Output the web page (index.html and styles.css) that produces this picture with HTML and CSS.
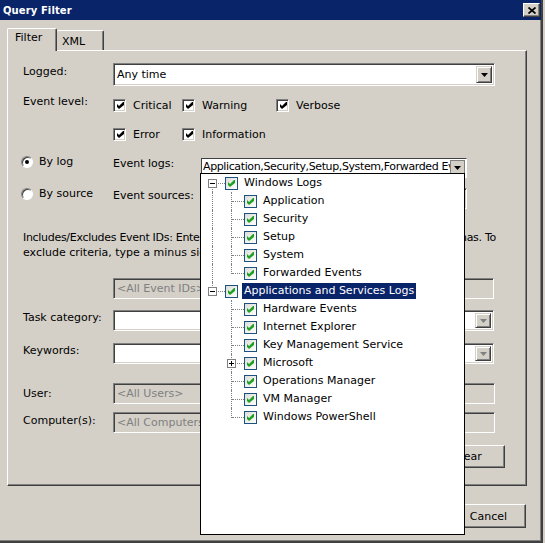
FILE: index.html
```html
<!DOCTYPE html>
<html>
<head>
<meta charset="utf-8">
<title>Query Filter</title>
<link rel="stylesheet" href="styles.css">
</head>
<body>
<div class="window">
  <div class="titlebar">
    <span class="title">Query Filter</span>
    <span class="close"><svg width="8" height="7" viewBox="0 0 8 7"><path d="M0.5 0.5L7.5 6.5M7.5 0.5L0.5 6.5" stroke="#000" stroke-width="1.7"/></svg></span>
  </div>
  <div class="tabs">
    <div class="tab active">Filter</div>
    <div class="tab">XML</div>
  </div>
  <div class="panel">
    <div class="row r-logged">
      <span class="lbl">Logged:</span>
      <div class="combo w382">
        <span class="val">Any time</span>
        <span class="ddbtn"><svg width="7" height="4" viewBox="0 0 7 4"><polygon points="0,0 7,0 3.5,4" fill="#000"/></svg></span>
      </div>
    </div>
    <div class="row r-level">
      <span class="lbl">Event level:</span>
      <div class="levels">
        <span class="chk"><span class="cb"><svg width="9" height="9" viewBox="0 0 9 9"><polygon points="1,3 3,5 7,1 8,1 8,4 3,8 1,6" fill="#000"/></svg></span>Critical</span>
        <span class="chk"><span class="cb"><svg width="9" height="9" viewBox="0 0 9 9"><polygon points="1,3 3,5 7,1 8,1 8,4 3,8 1,6" fill="#000"/></svg></span>Warning</span>
        <span class="chk"><span class="cb"><svg width="9" height="9" viewBox="0 0 9 9"><polygon points="1,3 3,5 7,1 8,1 8,4 3,8 1,6" fill="#000"/></svg></span>Verbose</span>
        <span class="chk"><span class="cb"><svg width="9" height="9" viewBox="0 0 9 9"><polygon points="1,3 3,5 7,1 8,1 8,4 3,8 1,6" fill="#000"/></svg></span>Error</span>
        <span class="chk"><span class="cb"><svg width="9" height="9" viewBox="0 0 9 9"><polygon points="1,3 3,5 7,1 8,1 8,4 3,8 1,6" fill="#000"/></svg></span>Information</span>
      </div>
    </div>
    <div class="row r-bylog">
      <span class="radio-item"><span class="radio on"></span>By log</span>
      <span class="lbl2">Event logs:</span>
      <div class="combo logs">
        <span class="val">Application,Security,Setup,System,Forwarded Events</span>
        <span class="ddbtn flat"><svg width="7" height="4" viewBox="0 0 7 4"><polygon points="0,0 7,0 3.5,4" fill="#000"/></svg></span>
      </div>
    </div>
    <div class="row r-bysource">
      <span class="radio-item"><span class="radio"></span>By source</span>
      <span class="lbl2">Event sources:</span>
      <div class="combo sources">
        <span class="val"></span>
        <span class="ddbtn"><svg width="7" height="4" viewBox="0 0 7 4"><polygon points="0,0 7,0 3.5,4" fill="#000"/></svg></span>
      </div>
    </div>
    <div class="desc">
      <div class="dline">Includes/Excludes Event IDs: Enter ID numbers and/or ID ranges separated by commas. To</div>
      <div class="dline">exclude criteria, type a minus sign first. For example 1,3,5-99,-76</div>
    </div>
    <div class="row r-ids">
      <span class="lbl"></span>
      <div class="tbox disabled w381">&lt;All Event IDs&gt;</div>
    </div>
    <div class="row r-task">
      <span class="lbl t1">Task category:</span>
      <div class="combo w381 h21">
        <span class="val"></span>
        <span class="ddbtn dis"><svg width="7" height="4" viewBox="0 0 7 4"><polygon points="0,0 7,0 3.5,4" fill="#808080"/></svg></span>
      </div>
    </div>
    <div class="row r-kw">
      <span class="lbl t1">Keywords:</span>
      <div class="combo w381 h21">
        <span class="val"></span>
        <span class="ddbtn dis"><svg width="7" height="4" viewBox="0 0 7 4"><polygon points="0,0 7,0 3.5,4" fill="#808080"/></svg></span>
      </div>
    </div>
    <div class="row r-user">
      <span class="lbl t3">User:</span>
      <div class="tbox disabled w382">&lt;All Users&gt;</div>
    </div>
    <div class="row r-comp">
      <span class="lbl t2">Computer(s):</span>
      <div class="tbox disabled w382">&lt;All Computers&gt;</div>
    </div>
    <div class="row r-clear">
      <span class="btn clear">Clear</span>
    </div>
  </div>
  <div class="buttons">
    <span class="btn">OK</span>
    <span class="btn">Cancel</span>
  </div>

  <div class="popup">
    <div class="trow"><span class="conn vb"><span class="exp"></span></span><span class="tcb"><svg width="9" height="9" viewBox="0 0 9 9"><polygon points="1,3 3,5 7,1 8,1 8,4 3,8 1,6"/></svg></span><span class="tl">Windows Logs</span></div>
    <div class="trow"><span class="guide v"></span><span class="conn vf"></span><span class="tcb"><svg width="9" height="9" viewBox="0 0 9 9"><polygon points="1,3 3,5 7,1 8,1 8,4 3,8 1,6"/></svg></span><span class="tl">Application</span></div>
    <div class="trow"><span class="guide v"></span><span class="conn vf"></span><span class="tcb"><svg width="9" height="9" viewBox="0 0 9 9"><polygon points="1,3 3,5 7,1 8,1 8,4 3,8 1,6"/></svg></span><span class="tl">Security</span></div>
    <div class="trow"><span class="guide v"></span><span class="conn vf"></span><span class="tcb"><svg width="9" height="9" viewBox="0 0 9 9"><polygon points="1,3 3,5 7,1 8,1 8,4 3,8 1,6"/></svg></span><span class="tl">Setup</span></div>
    <div class="trow"><span class="guide v"></span><span class="conn vf"></span><span class="tcb"><svg width="9" height="9" viewBox="0 0 9 9"><polygon points="1,3 3,5 7,1 8,1 8,4 3,8 1,6"/></svg></span><span class="tl">System</span></div>
    <div class="trow"><span class="guide v"></span><span class="conn vt"></span><span class="tcb"><svg width="9" height="9" viewBox="0 0 9 9"><polygon points="1,3 3,5 7,1 8,1 8,4 3,8 1,6"/></svg></span><span class="tl">Forwarded Events</span></div>
    <div class="trow"><span class="conn vt"><span class="exp"></span></span><span class="tcb"><svg width="9" height="9" viewBox="0 0 9 9"><polygon points="1,3 3,5 7,1 8,1 8,4 3,8 1,6"/></svg></span><span class="tl sel">Applications and Services Logs</span></div>
    <div class="trow"><span class="guide"></span><span class="conn vf"></span><span class="tcb"><svg width="9" height="9" viewBox="0 0 9 9"><polygon points="1,3 3,5 7,1 8,1 8,4 3,8 1,6"/></svg></span><span class="tl">Hardware Events</span></div>
    <div class="trow"><span class="guide"></span><span class="conn vf"></span><span class="tcb"><svg width="9" height="9" viewBox="0 0 9 9"><polygon points="1,3 3,5 7,1 8,1 8,4 3,8 1,6"/></svg></span><span class="tl">Internet Explorer</span></div>
    <div class="trow"><span class="guide"></span><span class="conn vf"></span><span class="tcb"><svg width="9" height="9" viewBox="0 0 9 9"><polygon points="1,3 3,5 7,1 8,1 8,4 3,8 1,6"/></svg></span><span class="tl">Key Management Service</span></div>
    <div class="trow"><span class="guide"></span><span class="conn vf"><span class="exp plus"></span></span><span class="tcb"><svg width="9" height="9" viewBox="0 0 9 9"><polygon points="1,3 3,5 7,1 8,1 8,4 3,8 1,6"/></svg></span><span class="tl">Microsoft</span></div>
    <div class="trow"><span class="guide"></span><span class="conn vf"></span><span class="tcb"><svg width="9" height="9" viewBox="0 0 9 9"><polygon points="1,3 3,5 7,1 8,1 8,4 3,8 1,6"/></svg></span><span class="tl">Operations Manager</span></div>
    <div class="trow"><span class="guide"></span><span class="conn vf"></span><span class="tcb"><svg width="9" height="9" viewBox="0 0 9 9"><polygon points="1,3 3,5 7,1 8,1 8,4 3,8 1,6"/></svg></span><span class="tl">VM Manager</span></div>
    <div class="trow"><span class="guide"></span><span class="conn vt"></span><span class="tcb"><svg width="9" height="9" viewBox="0 0 9 9"><polygon points="1,3 3,5 7,1 8,1 8,4 3,8 1,6"/></svg></span><span class="tl">Windows PowerShell</span></div>
  </div>
</div>
</body>
</html>
```

FILE: styles.css
```css
* { box-sizing: border-box; margin: 0; padding: 0; }
html, body { width: 545px; height: 543px; overflow: hidden; }
body {
  background: #d4d0c8;
  font-family: "DejaVu Sans", Tahoma, sans-serif;
  font-size: 11px;
  line-height: 13px;
  color: #000;
}
.window {
  position: relative;
  width: 543px;
  height: 543px;
  border-right: 2px solid #404040;
  border-bottom: 2px solid #404040;
  box-shadow: inset -1px -1px #808080;
}
.titlebar {
  height: 20px;
  background: #0a246a;
  color: #fff;
  display: flex;
  align-items: center;
  padding-left: 3px;
  padding-right: 1px;
}
.title { flex: 1; font-weight: bold; font-size: 10px; letter-spacing: 0.1px; }
.close {
  width: 17px;
  height: 14px;
  background: #d4d0c8;
  border: 1px solid;
  border-color: #fff #404040 #404040 #fff;
  box-shadow: inset -1px -1px #808080;
  display: flex;
  align-items: center;
  justify-content: center;
}
.tabs {
  display: flex;
  align-items: flex-end;
  height: 22px;
  margin: 8px 0 0 7px;
}
.tab {
  background: #d4d0c8;
  border-top: 1px solid #fff;
  border-right: 1px solid #404040;
  box-shadow: inset -1px 0 #808080;
  border-radius: 2px 2px 0 0;
}
.tab.active {
  position: relative;
  z-index: 1;
  width: 50px;
  height: 23px;
  margin-bottom: -1px;
  border-left: 1px solid #fff;
  padding: 2px 0 0 7px;
}
.tab:not(.active) {
  width: 47px;
  height: 20px;
  padding: 4px 0 0 5px;
}
.panel {
  width: 520px;
  height: 436px;
  margin-left: 7px;
  border-left: 1px solid #fff;
  border-top: 1px solid #fff;
  border-right: 1px solid #404040;
  border-bottom: 1px solid #404040;
  box-shadow: inset -1px -1px #808080;
  padding-left: 15px;
}
.row { display: flex; align-items: flex-start; }
.lbl { width: 90px; flex: none; padding-top: 2px; }
.lbl.t1 { padding-top: 1px; }
.lbl.t2 { padding-top: 2px; }
.lbl.t3 { padding-top: 4px; }
.lbl2 { width: 88px; flex: none; padding-top: 2px; }

.combo, .tbox {
  border: 1px solid;
  border-color: #808080 #fff #fff #808080;
  box-shadow: inset 1px 1px #404040, inset -1px -1px #d4d0c8;
}
.combo {
  display: flex;
  align-items: stretch;
  background: #fff;
  height: 23px;
  padding: 2px;
}
.combo .val {
  flex: 1;
  padding-left: 1px;
  white-space: nowrap;
  overflow: hidden;
  align-self: center;
}
.combo.h21 { height: 21px; }
.w382 { width: 382px; }
.w381 { width: 381px; }
.ddbtn {
  width: 16px;
  flex: none;
  background: #d4d0c8;
  border: 1px solid;
  border-color: #d4d0c8 #404040 #404040 #d4d0c8;
  box-shadow: inset 1px 1px #fff, inset -1px -1px #808080;
  display: flex;
  align-items: center;
  justify-content: center;
}
.ddbtn.flat {
  border-color: #808080;
  box-shadow: none;
  width: 15px;
}
.tbox {
  height: 21px;
  padding: 3px 0 0 3px;
  white-space: nowrap;
  overflow: hidden;
}
.tbox.disabled { background: #d4d0c8; color: #808080; }

.r-logged { margin-top: 12px; height: 23px; }
.r-level { margin-top: 9px; }
.r-level .lbl { padding-top: 0; }
.levels {
  display: grid;
  grid-template-columns: 69px 94px auto;
  grid-auto-rows: 20px;
  row-gap: 9px;
}
.chk { display: flex; align-items: center; gap: 7px; white-space: nowrap; }
.cb {
  width: 13px;
  height: 13px;
  flex: none;
  background: #fff;
  border: 1px solid;
  border-color: #808080 #fff #fff #808080;
  box-shadow: inset 1px 1px #404040, inset -1px -1px #d4d0c8;
  display: flex;
  align-items: center;
  justify-content: center;
}
.cb svg { margin: 1px 0 0 1px; }

.r-bylog { margin-top: 11px; height: 23px; }
.r-bysource { margin-top: 9px; height: 23px; }
.radio-item {
  width: 92px;
  margin-left: -2px;
  flex: none;
  display: flex;
  align-items: center;
  gap: 6px;
  height: 13px;
}
.radio {
  position: relative;
  width: 12px;
  height: 12px;
  flex: none;
  border-radius: 50%;
  background: #fff;
  border: 1px solid;
  border-color: #808080 #fff #fff #808080;
  box-shadow: inset 1px 1px #404040;
}
.radio.on::after {
  content: "";
  position: absolute;
  left: 3px;
  top: 3px;
  width: 4px;
  height: 4px;
  border-radius: 50%;
  background: #000;
}
.combo.logs {
  width: 266px;
  height: 20px;
  margin-top: 3px;
  padding: 1px;
  border-color: #404040 #fff #fff #404040;
  box-shadow: none;
}
.combo.logs .val { padding-left: 0; align-self: flex-start; letter-spacing: -0.38px; }
.combo.sources { width: 266px; height: 21px; margin-top: 1px; }

.desc { margin-top: 20px; line-height: 15px; white-space: nowrap; }
.dline:first-child { letter-spacing: -0.3px; }
.r-ids { margin-top: 18px; }
.r-task { margin-top: 11px; }
.r-kw { margin-top: 12px; }
.r-user { margin-top: 19px; }
.r-comp { margin-top: 8px; }
.r-clear { margin-top: 12px; justify-content: flex-end; padding-right: 21px; }

.btn {
  width: 75px;
  height: 23px;
  display: flex;
  align-items: center;
  justify-content: center;
  background: #d4d0c8;
  border: 1px solid;
  border-color: #fff #404040 #404040 #fff;
  box-shadow: inset -1px -1px #808080;
}
.buttons {
  display: flex;
  justify-content: flex-end;
  gap: 6px;
  margin-top: 18px;
  padding-right: 15px;
}
.buttons .btn { height: 24px; }

.popup {
  position: absolute;
  left: 200px;
  top: 173px;
  width: 265px;
  height: 362px;
  background: #fff;
  border: 1px solid #000;
  padding-left: 1px;
}
.trow {
  display: flex;
  align-items: center;
  height: 18px;
  white-space: nowrap;
}
.guide, .conn {
  position: relative;
  height: 18px;
  flex: none;
}
.guide { width: 19px; }
.conn { width: 23px; }
.guide.v::after,
.conn::after {
  content: "";
  position: absolute;
  left: 10px;
  border-left: 1px dotted #808080;
}
.guide.v::after { top: 0; bottom: 0; }
.conn::before {
  content: "";
  position: absolute;
  left: 11px;
  top: 9px;
  width: 12px;
  border-top: 1px dotted #808080;
}
.conn.vf::after { top: 0; bottom: 0; }
.conn.vt::after { top: 0; height: 10px; }
.conn.vb::after { top: 9px; bottom: 0; }
.exp {
  position: absolute;
  z-index: 1;
  left: 6px;
  top: 5px;
  width: 9px;
  height: 9px;
  border: 1px solid #808080;
  background: #fff;
}
.exp::before {
  content: "";
  position: absolute;
  left: 1px;
  top: 3px;
  width: 5px;
  height: 1px;
  background: #000;
}
.exp.plus::after {
  content: "";
  position: absolute;
  left: 3px;
  top: 1px;
  width: 1px;
  height: 5px;
  background: #000;
}
.tcb {
  width: 13px;
  height: 13px;
  flex: none;
  border: 1px solid #1c5180;
  background: linear-gradient(135deg, #dcdcd7, #ffffff);
  display: flex;
  align-items: center;
  justify-content: center;
}
.tcb svg { fill: #21a121; }
.tl {
  margin-left: 4px;
  padding: 0 2px;
  line-height: 16px;
}
.tl.sel { background: #0a246a; color: #fff; }
```
